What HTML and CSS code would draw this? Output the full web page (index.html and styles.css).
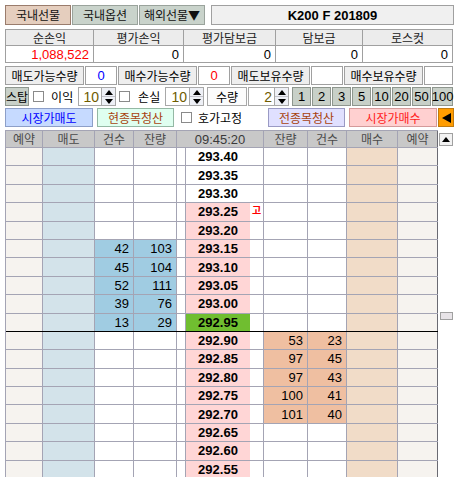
FILE: index.html
```html
<!DOCTYPE html>
<html lang="ko">
<head>
<meta charset="utf-8">
<title>선물 주문</title>
<link rel="stylesheet" href="styles.css">
</head>
<body>
<div class="app">
  <div class="top">
    <div class="tab tab-on">국내선물</div>
    <div class="tab">국내옵션</div>
    <div class="tab">해외선물▼</div>
    <div class="symbol">K200 F 201809</div>
  </div>

  <div class="pnl">
    <div class="ph">순손익</div>
    <div class="ph">평가손익</div>
    <div class="ph">평가담보금</div>
    <div class="ph">담보금</div>
    <div class="ph">로스컷</div>
    <div class="pv neg">1,088,522</div>
    <div class="pv">0</div>
    <div class="pv">0</div>
    <div class="pv">0</div>
    <div class="pv">0</div>
  </div>

  <div class="qty">
    <div class="ql">매도가능수량</div>
    <div class="qv blue">0</div>
    <div class="ql">매수가능수량</div>
    <div class="qv red">0</div>
    <div class="ql">매도보유수량</div>
    <div class="qv"></div>
    <div class="ql">매수보유수량</div>
    <div class="qv last"></div>
  </div>

  <div class="stop">
    <div class="btn-stop">스탑</div>
    <span class="chk chk-a"></span>
    <span class="lbl lbl-a">이익</span>
    <div class="spin spin-a"><div class="spin-val">10</div><div class="spin-btns"><span class="arr"><i class="up"></i></span><span class="arr"><i class="dn"></i></span></div></div>
    <span class="chk chk-b"></span>
    <span class="lbl lbl-b">손실</span>
    <div class="spin spin-b"><div class="spin-val">10</div><div class="spin-btns"><span class="arr"><i class="up"></i></span><span class="arr"><i class="dn"></i></span></div></div>
    <div class="qlabel">수량</div>
    <div class="spin spin-c"><div class="spin-val">2</div><div class="spin-btns"><span class="arr"><i class="up"></i></span><span class="arr"><i class="dn"></i></span></div></div>
    <div class="qbtns">
      <div class="qb">1</div>
      <div class="qb">2</div>
      <div class="qb">3</div>
      <div class="qb">5</div>
      <div class="qb">10</div>
      <div class="qb">20</div>
      <div class="qb">50</div>
      <div class="qb wide">100</div>
    </div>
  </div>

  <div class="orders">
    <div class="ob mkt-sell">시장가매도</div>
    <div class="ob clr-cur">현종목청산</div>
    <span class="chk chk-c"></span>
    <span class="lbl-fix">호가고정</span>
    <div class="ob clr-all">전종목청산</div>
    <div class="ob mkt-buy">시장가매수</div>
    <div class="ob arrow-btn"><i class="left"></i></div>
  </div>

  <div class="book">
    <div class="grid">
      <div class="row hdr">
        <div class="h">예약</div><div class="h">매도</div><div class="h">건수</div><div class="h">잔량</div><div class="h time">09:45:20</div><div class="h">잔량</div><div class="h">건수</div><div class="h">매수</div><div class="h last">예약</div>
      </div>

      <div class="row"><div class="c rv"></div><div class="c sd"></div><div class="c"></div><div class="c"></div><div class="c"></div><div class="p">293.40</div><div class="c mk"></div><div class="c"></div><div class="c"></div><div class="c bd"></div><div class="c rv last"></div></div>
      <div class="row"><div class="c rv"></div><div class="c sd"></div><div class="c"></div><div class="c"></div><div class="c"></div><div class="p">293.35</div><div class="c mk"></div><div class="c"></div><div class="c"></div><div class="c bd"></div><div class="c rv last"></div></div>
      <div class="row"><div class="c rv"></div><div class="c sd"></div><div class="c"></div><div class="c"></div><div class="c"></div><div class="p">293.30</div><div class="c mk"></div><div class="c"></div><div class="c"></div><div class="c bd"></div><div class="c rv last"></div></div>
      <div class="row"><div class="c rv"></div><div class="c sd"></div><div class="c"></div><div class="c"></div><div class="c"></div><div class="p pk">293.25</div><div class="c mk"><span class="go">고</span></div><div class="c"></div><div class="c"></div><div class="c bd"></div><div class="c rv last"></div></div>
      <div class="row"><div class="c rv"></div><div class="c sd"></div><div class="c"></div><div class="c"></div><div class="c"></div><div class="p pk">293.20</div><div class="c mk"></div><div class="c"></div><div class="c"></div><div class="c bd"></div><div class="c rv last"></div></div>
      <div class="row"><div class="c rv"></div><div class="c sd"></div><div class="c sq">42</div><div class="c sq">103</div><div class="c"></div><div class="p pk">293.15</div><div class="c mk"></div><div class="c"></div><div class="c"></div><div class="c bd"></div><div class="c rv last"></div></div>
      <div class="row"><div class="c rv"></div><div class="c sd"></div><div class="c sq">45</div><div class="c sq">104</div><div class="c"></div><div class="p pk">293.10</div><div class="c mk"></div><div class="c"></div><div class="c"></div><div class="c bd"></div><div class="c rv last"></div></div>
      <div class="row"><div class="c rv"></div><div class="c sd"></div><div class="c sq">52</div><div class="c sq">111</div><div class="c"></div><div class="p pk">293.05</div><div class="c mk"></div><div class="c"></div><div class="c"></div><div class="c bd"></div><div class="c rv last"></div></div>
      <div class="row"><div class="c rv"></div><div class="c sd"></div><div class="c sq">39</div><div class="c sq">76</div><div class="c"></div><div class="p pk">293.00</div><div class="c mk"></div><div class="c"></div><div class="c"></div><div class="c bd"></div><div class="c rv last"></div></div>
      <div class="row split"><div class="c rv"></div><div class="c sd"></div><div class="c sq">13</div><div class="c sq">29</div><div class="c"></div><div class="p now">292.95</div><div class="c mk"></div><div class="c"></div><div class="c"></div><div class="c bd"></div><div class="c rv last"></div></div>
      <div class="row"><div class="c rv"></div><div class="c sd"></div><div class="c"></div><div class="c"></div><div class="c"></div><div class="p pk">292.90</div><div class="c mk"></div><div class="c bq">53</div><div class="c bq">23</div><div class="c bd"></div><div class="c rv last"></div></div>
      <div class="row"><div class="c rv"></div><div class="c sd"></div><div class="c"></div><div class="c"></div><div class="c"></div><div class="p pk">292.85</div><div class="c mk"></div><div class="c bq">97</div><div class="c bq">45</div><div class="c bd"></div><div class="c rv last"></div></div>
      <div class="row"><div class="c rv"></div><div class="c sd"></div><div class="c"></div><div class="c"></div><div class="c"></div><div class="p pk">292.80</div><div class="c mk"></div><div class="c bq">97</div><div class="c bq">43</div><div class="c bd"></div><div class="c rv last"></div></div>
      <div class="row"><div class="c rv"></div><div class="c sd"></div><div class="c"></div><div class="c"></div><div class="c"></div><div class="p pk">292.75</div><div class="c mk"></div><div class="c bq">100</div><div class="c bq">41</div><div class="c bd"></div><div class="c rv last"></div></div>
      <div class="row"><div class="c rv"></div><div class="c sd"></div><div class="c"></div><div class="c"></div><div class="c"></div><div class="p pk">292.70</div><div class="c mk"></div><div class="c bq">101</div><div class="c bq">40</div><div class="c bd"></div><div class="c rv last"></div></div>
      <div class="row"><div class="c rv"></div><div class="c sd"></div><div class="c"></div><div class="c"></div><div class="c"></div><div class="p pk">292.65</div><div class="c mk"></div><div class="c"></div><div class="c"></div><div class="c bd"></div><div class="c rv last"></div></div>
      <div class="row"><div class="c rv"></div><div class="c sd"></div><div class="c"></div><div class="c"></div><div class="c"></div><div class="p pk">292.60</div><div class="c mk"></div><div class="c"></div><div class="c"></div><div class="c bd"></div><div class="c rv last"></div></div>
      <div class="row"><div class="c rv"></div><div class="c sd"></div><div class="c"></div><div class="c"></div><div class="c"></div><div class="p pk">292.55</div><div class="c mk"></div><div class="c"></div><div class="c"></div><div class="c bd"></div><div class="c rv last"></div></div>
    </div>
    <div class="scroll">
      <div class="sb-up"><i class="up"></i></div>
      <div class="sb-thumb"></div>
    </div>
  </div>
</div>
</body>
</html>
```

FILE: styles.css
```css
html, body {
  margin: 0;
  padding: 0;
  background: #ffffff;
}
body {
  width: 455px;
  height: 477px;
  overflow: hidden;
  font-family: "Noto Sans CJK KR", "Liberation Sans", sans-serif;
  font-size: 12px;
  color: #000;
}
* { box-sizing: border-box; }

.app {
  padding: 5px 0 0 5px;
  width: 455px;
}

/* ---------- top tabs ---------- */
.top {
  display: flex;
  height: 20px;
}
.tab {
  width: 66px;
  height: 20px;
  margin-right: 1px;
  background: #c9d3cb;
  border: 1px solid #9aa39c;
  display: flex;
  align-items: center;
  justify-content: center;
  line-height: 1;
  color: #111;
  white-space: nowrap;
}
.tab-on {
  background: #e5cebe;
  border-color: #9a7c6c;
  width: 66px;
}
.symbol {
  margin-left: 5px;
  width: 243px;
  height: 20px;
  background: #f0f0f0;
  border: 1px solid #a0a0a0;
  display: flex;
  align-items: center;
  justify-content: center;
  font-family: "Liberation Sans", sans-serif;
  font-weight: bold;
  font-size: 13px;
  line-height: 1;
}

/* ---------- pnl grid ---------- */
.pnl {
  margin-top: 4px;
  display: grid;
  grid-template-columns: 88px 90px 92px 87px 90px;
  grid-template-rows: 16px 17px;
  border-top: 1px solid #a0a0a0;
  border-left: 1px solid #a0a0a0;
  width: 448px;
}
.ph, .pv {
  border-right: 1px solid #a0a0a0;
  border-bottom: 1px solid #a0a0a0;
  display: flex;
  align-items: center;
  line-height: 1;
}
.ph {
  background: #ececec;
  justify-content: center;
  color: #222;
}
.pv {
  justify-content: flex-end;
  padding-right: 4px;
  font-family: "Liberation Sans Narrow", "Liberation Sans", sans-serif;
  font-size: 13px;
}
.neg { color: #ff0000; }

/* ---------- quantity row ---------- */
.qty {
  margin-top: 3px;
  display: flex;
  height: 19px;
  width: 448px;
}
.ql, .qv {
  height: 19px;
  border: 1px solid #a0a0a0;
  display: flex;
  align-items: center;
  justify-content: center;
  line-height: 1;
  margin-right: 1px;
  white-space: nowrap;
}
.ql {
  width: 79px;
  background: #eeeeee;
}
.qv {
  width: 32px;
  background: #ffffff;
  font-family: "Liberation Sans Narrow", "Liberation Sans", sans-serif;
  font-size: 13px;
}
.qv.last { flex: 1; margin-right: 0; }
.blue { color: #0000ff; }
.red { color: #ff0000; }

/* ---------- stop row ---------- */
.stop {
  margin-top: 2px;
  display: flex;
  align-items: center;
  height: 19px;
  width: 448px;
}
.btn-stop {
  width: 27px;
  height: 19px;
  background: #c8d0c8;
  border: 1px solid #8e968e;
  display: flex;
  align-items: center;
  justify-content: center;
  line-height: 1;
  white-space: nowrap;
}
.chk {
  display: block;
  width: 11px;
  height: 11px;
  background: #fff;
  border: 1px solid #8a8a8a;
  flex: none;
}
.chk-a { margin-left: 4px; }
.chk-b { margin-left: 3px; }
.lbl {
  display: block;
  width: 24px;
  line-height: 1;
  font-size: 12px;
  white-space: nowrap;
  flex: none;
}
.lbl-a { margin-left: 7px; }
.lbl-b { margin-left: 8px; }
.spin {
  display: flex;
  height: 19px;
  flex: none;
}
.spin-a { margin-left: 3px; }
.spin-b { margin-left: 3px; }
.spin-c { margin-left: 1px; }
.spin-val {
  height: 19px;
  background: #fff;
  border: 1px solid #a8a8a8;
  display: flex;
  align-items: center;
  justify-content: flex-end;
  padding-right: 2px;
  color: #6f5c00;
  font-family: "Liberation Sans Narrow", "Liberation Sans", sans-serif;
  font-size: 14px;
  line-height: 1;
}
.spin-a .spin-val { width: 24px; }
.spin-b .spin-val { width: 25px; }
.spin-c .spin-val { width: 27px; }
.spin-btns {
  width: 14px;
  height: 19px;
  display: flex;
  flex-direction: column;
  border: 1px solid #a8a8a8;
  border-left: none;
  background: #eef0f6;
}
.arr {
  flex: 1;
  display: flex;
  align-items: center;
  justify-content: center;
}
.arr + .arr { border-top: 1px solid #c4c4cc; }
.up, .dn, .left {
  display: block;
  width: 0;
  height: 0;
}
.up {
  border-left: 4px solid transparent;
  border-right: 4px solid transparent;
  border-bottom: 5px solid #000;
}
.dn {
  border-left: 4px solid transparent;
  border-right: 4px solid transparent;
  border-top: 5px solid #000;
}
.qlabel {
  margin-left: 3px;
  width: 40px;
  height: 19px;
  border: 1px solid #a8a8a8;
  background: #fcfcfc;
  display: flex;
  align-items: center;
  justify-content: center;
  line-height: 1;
  white-space: nowrap;
  flex: none;
}
.qbtns {
  margin-left: 3px;
  display: flex;
  gap: 1px;
}
.qb {
  width: 19px;
  height: 19px;
  background: #c8d0c8;
  border: 1px solid #8e968e;
  display: flex;
  align-items: center;
  justify-content: center;
  font-family: "Liberation Sans Narrow", "Liberation Sans", sans-serif;
  font-size: 13px;
  line-height: 1;
}
.qb.wide { width: 21px; }

/* ---------- order buttons ---------- */
.orders {
  margin-top: 2px;
  display: flex;
  align-items: center;
  height: 19px;
  width: 448px;
}
.ob {
  height: 19px;
  display: flex;
  align-items: center;
  justify-content: center;
  line-height: 1;
  border: 1px solid #999;
  font-size: 12px;
  white-space: nowrap;
  flex: none;
}
.mkt-sell {
  width: 88px;
  background: #c6daff;
  border-color: #8d9fc8;
  color: #0000ff;
}
.clr-cur {
  margin-left: 4px;
  width: 77px;
  background: #dffff0;
  border-color: #94b8a4;
  color: #a8430f;
}
.chk-c { margin-left: 7px; }
.lbl-fix {
  margin-left: 6px;
  width: 48px;
  line-height: 1;
  white-space: nowrap;
  flex: none;
}
.clr-all {
  margin-left: 22px;
  width: 77px;
  background: #e0e0ff;
  border-color: #9a9ac4;
  color: #a8430f;
}
.mkt-buy {
  margin-left: 4px;
  width: 88px;
  background: #ffd0d0;
  border-color: #d49a9a;
  color: #ff1a1a;
}
.arrow-btn {
  margin-left: 1px;
  width: 16px;
  background: #ff9c00;
  border-color: #c07a10;
}
.left {
  border-top: 5px solid transparent;
  border-bottom: 5px solid transparent;
  border-right: 9px solid #000;
}

/* ---------- order book ---------- */
.book {
  margin-top: 3px;
  display: flex;
}
.grid {
  width: 433px;
  border-top: 1px solid #a4a4b4;
  border-left: 1px solid #a4a4b4;
}
.row {
  display: grid;
  grid-template-columns: 37px 52px 39px 43px 9px 64px 14px 44px 39px 51px 40px;
  height: 18.4px;
  border-bottom: 1px solid #a4a4b4;
  font-family: "Liberation Sans Narrow", "Liberation Sans", sans-serif;
  font-size: 13px;
  line-height: 1;
}
.row.split { border-bottom-color: #000; }
.row.hdr {
  height: 17px;
  grid-template-columns: 37px 52px 39px 43px 87px 44px 39px 51px 40px;
  background: #c8c8c8;
}
.h {
  border-right: 1px solid #a4a4b4;
  display: flex;
  align-items: center;
  justify-content: center;
  font-family: "Noto Sans CJK KR", sans-serif;
  font-size: 12px;
  color: #4a4a4a;
}
.h.time {
  font-family: "Liberation Sans Narrow", "Liberation Sans", sans-serif;
  font-size: 13px;
  color: #3a3a3a;
}
.c {
  border-right: 1px solid #a4a4b4;
  display: flex;
  align-items: center;
  justify-content: flex-end;
  padding-right: 4px;
  background: #fff;
}
.c.last, .h.last { border-right-color: #6a6a72; }
.rv { background: #f6f3ef; }
.sd { background: #d3e3ea; }
.bd { background: #f1dcc8; }
.sq { background: #a0cce2; }
.bq { background: #efbfa1; }
.mk {
  justify-content: flex-start;
  padding: 0 0 0 2px;
}
.go {
  color: #ff0000;
  font-family: "Noto Sans CJK KR", sans-serif;
  font-size: 10px;
  font-weight: bold;
  margin-top: -3px;
}
.p {
  display: flex;
  align-items: center;
  justify-content: center;
  font-family: "Liberation Sans", sans-serif;
  font-weight: bold;
  font-size: 13px;
  background: #fff;
}
.p.pk { background: #ffd6d6; }
.p.now { background: #70be30; }

.scroll {
  width: 15px;
  display: flex;
  flex-direction: column;
  background: #fff;
}
.sb-up {
  margin-top: 3px;
  margin-left: 1px;
  width: 14px;
  height: 13px;
  border: 1px solid #a0a0a0;
  background: #f2f2f2;
  display: flex;
  align-items: center;
  justify-content: center;
}
.sb-thumb {
  margin-top: 166px;
  margin-left: 2px;
  width: 13px;
  height: 8px;
  border: 1px solid #a0a0a0;
  background: #e8e4e8;
}
```
